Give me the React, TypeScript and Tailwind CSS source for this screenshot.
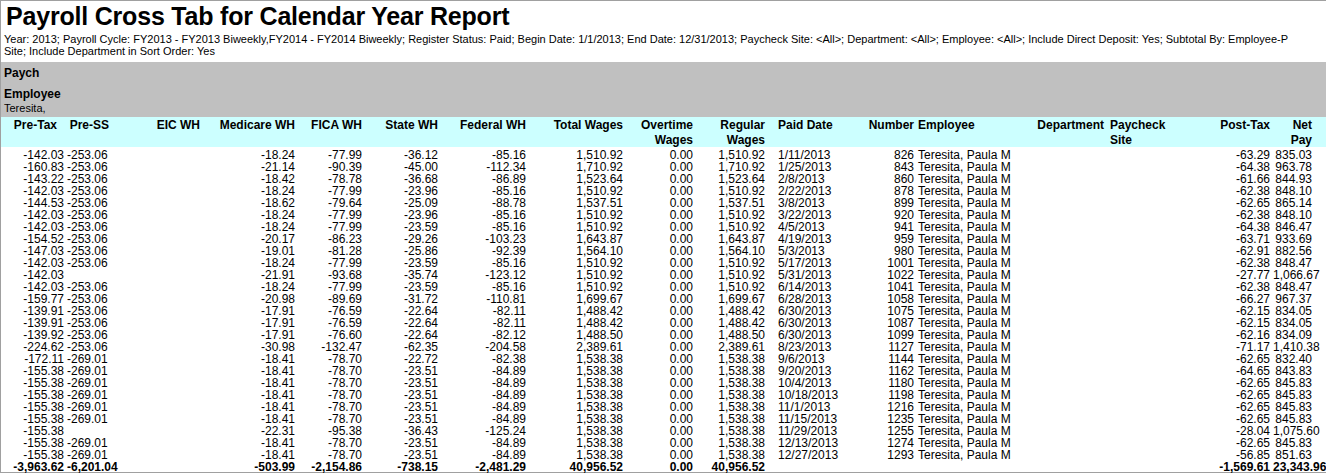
const rows: string[][] = [
["-142.03","-253.06","","-18.24","-77.99","-36.12","-85.16","1,510.92","0.00","1,510.92","1/11/2013","826","-63.29","835.03"],
["-160.83","-253.06","","-21.14","-90.39","-45.00","-112.34","1,710.92","0.00","1,710.92","1/25/2013","843","-64.38","963.78"],
["-143.22","-253.06","","-18.42","-78.78","-36.68","-86.89","1,523.64","0.00","1,523.64","2/8/2013","860","-61.66","844.93"],
["-142.03","-253.06","","-18.24","-77.99","-23.96","-85.16","1,510.92","0.00","1,510.92","2/22/2013","878","-62.38","848.10"],
["-144.53","-253.06","","-18.62","-79.64","-25.09","-88.78","1,537.51","0.00","1,537.51","3/8/2013","899","-62.65","865.14"],
["-142.03","-253.06","","-18.24","-77.99","-23.96","-85.16","1,510.92","0.00","1,510.92","3/22/2013","920","-62.38","848.10"],
["-142.03","-253.06","","-18.24","-77.99","-23.59","-85.16","1,510.92","0.00","1,510.92","4/5/2013","941","-64.38","846.47"],
["-154.52","-253.06","","-20.17","-86.23","-29.26","-103.23","1,643.87","0.00","1,643.87","4/19/2013","959","-63.71","933.69"],
["-147.03","-253.06","","-19.01","-81.28","-25.86","-92.39","1,564.10","0.00","1,564.10","5/3/2013","980","-62.91","882.56"],
["-142.03","-253.06","","-18.24","-77.99","-23.59","-85.16","1,510.92","0.00","1,510.92","5/17/2013","1001","-62.38","848.47"],
["-142.03","","","-21.91","-93.68","-35.74","-123.12","1,510.92","0.00","1,510.92","5/31/2013","1022","-27.77","1,066.67"],
["-142.03","-253.06","","-18.24","-77.99","-23.59","-85.16","1,510.92","0.00","1,510.92","6/14/2013","1041","-62.38","848.47"],
["-159.77","-253.06","","-20.98","-89.69","-31.72","-110.81","1,699.67","0.00","1,699.67","6/28/2013","1058","-66.27","967.37"],
["-139.91","-253.06","","-17.91","-76.59","-22.64","-82.11","1,488.42","0.00","1,488.42","6/30/2013","1075","-62.15","834.05"],
["-139.91","-253.06","","-17.91","-76.59","-22.64","-82.11","1,488.42","0.00","1,488.42","6/30/2013","1087","-62.15","834.05"],
["-139.92","-253.06","","-17.91","-76.60","-22.64","-82.12","1,488.50","0.00","1,488.50","6/30/2013","1099","-62.16","834.09"],
["-224.62","-253.06","","-30.98","-132.47","-62.35","-204.58","2,389.61","0.00","2,389.61","8/23/2013","1127","-71.17","1,410.38"],
["-172.11","-269.01","","-18.41","-78.70","-22.72","-82.38","1,538.38","0.00","1,538.38","9/6/2013","1144","-62.65","832.40"],
["-155.38","-269.01","","-18.41","-78.70","-23.51","-84.89","1,538.38","0.00","1,538.38","9/20/2013","1162","-64.65","843.83"],
["-155.38","-269.01","","-18.41","-78.70","-23.51","-84.89","1,538.38","0.00","1,538.38","10/4/2013","1180","-62.65","845.83"],
["-155.38","-269.01","","-18.41","-78.70","-23.51","-84.89","1,538.38","0.00","1,538.38","10/18/2013","1198","-62.65","845.83"],
["-155.38","-269.01","","-18.41","-78.70","-23.51","-84.89","1,538.38","0.00","1,538.38","11/1/2013","1216","-62.65","845.83"],
["-155.38","-269.01","","-18.41","-78.70","-23.51","-84.89","1,538.38","0.00","1,538.38","11/15/2013","1235","-62.65","845.83"],
["-155.38","","","-22.31","-95.38","-36.43","-125.24","1,538.38","0.00","1,538.38","11/29/2013","1255","-28.04","1,075.60"],
["-155.38","-269.01","","-18.41","-78.70","-23.51","-84.89","1,538.38","0.00","1,538.38","12/13/2013","1274","-62.65","845.83"],
["-155.38","-269.01","","-18.41","-78.70","-23.51","-84.89","1,538.38","0.00","1,538.38","12/27/2013","1293","-56.85","851.63"],
];

const grid = "grid grid-cols-[66px_42px_94px_95px_67px_76px_88px_97px_70px_72px_88px_60px_107px_84px_90px_76px_42px]";
const F = { fontFamily: "Tahoma, 'DejaVu Sans Condensed', 'Liberation Sans Narrow', 'Liberation Sans', sans-serif" };

export default function App() {
  return (
    <div className="w-[1326px] h-[473px] overflow-hidden bg-white text-black border-t border-l border-[#a0a0a0]" style={F}>
      <div className="pl-[5px] text-[25px] font-bold leading-[30px] tracking-[-0.2px]" style={{fontFamily:"'Liberation Sans', sans-serif"}}>Payroll Cross Tab for Calendar Year Report</div>
      <div className="pl-[3px] text-[10px] leading-[12px] mt-[2px] w-[1300px]" style={{fontFamily:"'Liberation Sans Narrow','Liberation Sans',sans-serif", fontSize:"11px"}}>
        Year: 2013; Payroll Cycle: FY2013 - FY2013 Biweekly,FY2014 - FY2014 Biweekly; Register Status: Paid; Begin Date: 1/1/2013; End Date: 12/31/2013; Paycheck Site: &lt;All&gt;; Department: &lt;All&gt;; Employee: &lt;All&gt;; Include Direct Deposit: Yes; Subtotal By: Employee-P<br />Site; Include Department in Sort Order: Yes
      </div>
      <div className="mt-[5px] bg-[#c0c0c0] h-[55px] pl-[3px] pt-[3px]" style={{fontFamily:"'Liberation Sans', sans-serif"}}>
        <div className="text-[12px] font-bold leading-[16px]">Paych</div>
        <div className="text-[12px] font-bold leading-[16px] mt-[5px]">Employee</div>
        <div className="text-[11px] leading-[12px]" style={{fontFamily:"'Liberation Sans Narrow','Liberation Sans',sans-serif"}}>Teresita,</div>
      </div>
      <div className={`${grid} bg-[#ccffff] h-[30px] text-[12px] font-bold leading-[15px] pt-[1px]`} style={{fontFamily:"'Liberation Sans', sans-serif"}}>
        <div className="text-right pr-[10px]">Pre-Tax</div>
        <div className="text-right">Pre-SS</div>
        <div className="text-right pr-[3px]">EIC WH</div>
        <div className="text-right pr-[3px]">Medicare WH</div>
        <div className="text-right pr-[3px]">FICA WH</div>
        <div className="text-right pr-[3px]">State WH</div>
        <div className="text-right pr-[3px]">Federal WH</div>
        <div className="text-right pr-[3px]">Total Wages</div>
        <div className="text-right pr-[3px]">Overtime<br/>Wages</div>
        <div className="text-right pr-[3px]">Regular<br/>Wages</div>
        <div className="pl-[10px]">Paid Date</div>
        <div className="text-right pr-[2px]">Number</div>
        <div className="pl-[2px]">Employee</div>
        <div className="text-right pr-[3px]">Department</div>
        <div className="pl-[3px]">Paycheck<br/>Site</div>
        <div className="text-right pr-[3px]">Post-Tax</div>
        <div className="text-right pr-[3px]">Net Pay</div>
      </div>
      <div className="pt-[2px] text-[12px] leading-[12px]" style={{fontFamily:"'Liberation Sans Narrow','Liberation Sans',sans-serif"}}>
        {rows.map((r, i) => (
          <div key={i} className={`${grid} h-[12px]`}>
            <div className="text-right pr-[3px]">{r[0]}</div>
            <div className="text-right pr-[3px]">{r[1]}</div>
            <div className="text-right pr-[3px]">{r[2]}</div>
            <div className="text-right pr-[3px]">{r[3]}</div>
            <div className="text-right pr-[3px]">{r[4]}</div>
            <div className="text-right pr-[3px]">{r[5]}</div>
            <div className="text-right pr-[3px]">{r[6]}</div>
            <div className="text-right pr-[3px]">{r[7]}</div>
            <div className="text-right pr-[3px]">{r[8]}</div>
            <div className="text-right pr-[3px]">{r[9]}</div>
            <div className="pl-[10px]">{r[10]}</div>
            <div className="text-right pr-[2px]">{r[11]}</div>
            <div className="pl-[2px] whitespace-nowrap">Teresita, Paula M</div>
            <div></div>
            <div></div>
            <div className="text-right pr-[3px]">{r[12]}</div>
            <div className="text-right pr-[3px]">{r[13]}</div>
          </div>
        ))}
        <div className={`${grid} h-[12px] font-bold border-b border-[#a0a0a0]`}>
          <div className="text-right pr-[3px]">-3,963.62</div>
          <div className="text-right pr-[3px]">-6,201.04</div>
          <div></div>
          <div className="text-right pr-[3px]">-503.99</div>
          <div className="text-right pr-[3px]">-2,154.86</div>
          <div className="text-right pr-[3px]">-738.15</div>
          <div className="text-right pr-[3px]">-2,481.29</div>
          <div className="text-right pr-[3px]">40,956.52</div>
          <div className="text-right pr-[3px]">0.00</div>
          <div className="text-right pr-[3px]">40,956.52</div>
          <div></div><div></div><div></div><div></div><div></div>
          <div className="text-right pr-[3px]">-1,569.61</div>
          <div className="text-right pr-[3px]">23,343.96</div>
        </div>
      </div>
    </div>
  );
}
